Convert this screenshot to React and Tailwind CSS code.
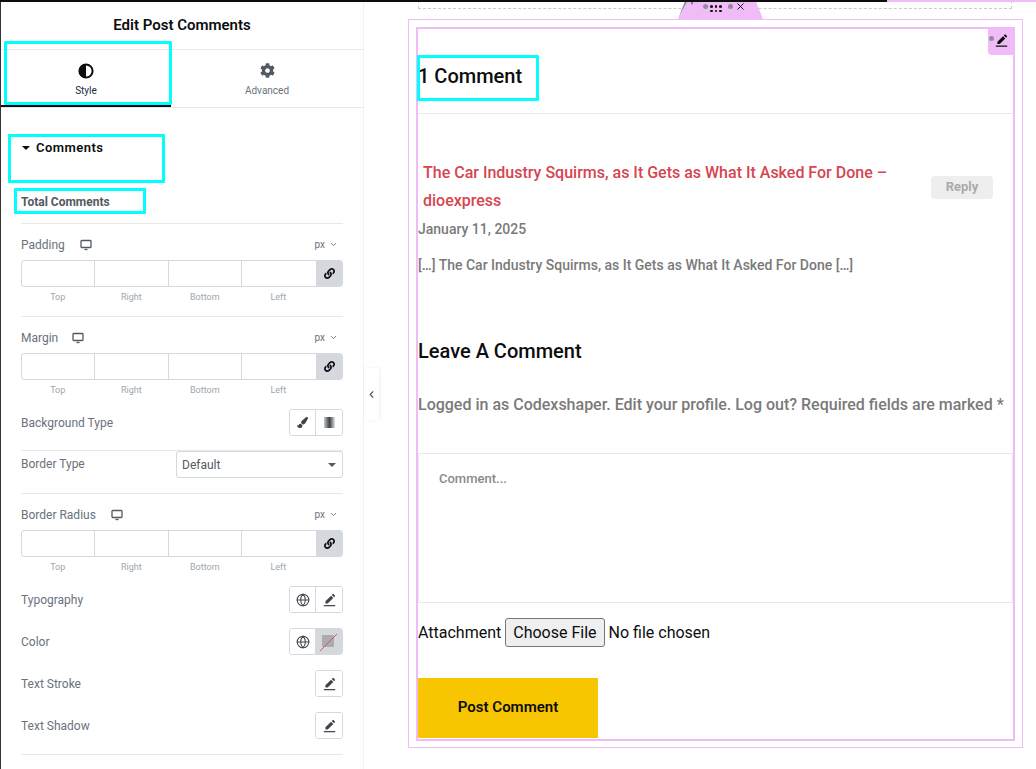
import { ChevronDown, ChevronLeft, Globe, Plus, X } from 'lucide-react'
import { FaCog, FaLink, FaPaintBrush } from 'react-icons/fa'

function Cyan({ className }) {
  return <div className={`absolute border-[3px] border-[#00ffff] rounded-[1px] pointer-events-none ${className}`} />
}

function Pencil({ className = 'w-[13px] h-[14px] text-[#3f444b]' }) {
  return (
    <svg viewBox="0 0 16 16" className={className} fill="currentColor">
      <path d="M3 9.6 9.9 2.7l2.8 2.8-6.9 6.9H3z" />
      <path d="m10.8 1.8 1.1-1.1a.7.7 0 0 1 1 0l1.8 1.8a.7.7 0 0 1 0 1l-1.1 1.1z" />
      <rect x="1" y="14.2" width="14" height="1.5" />
    </svg>
  )
}

function Monitor() {
  return (
    <svg viewBox="0 0 12 12" className="w-[12px] h-[12px] text-[#515962]" fill="none" stroke="currentColor">
      <rect x="1" y="1.5" width="10" height="7" rx=".8" strokeWidth="1.3" />
      <path d="M4.5 10.5h3" strokeWidth="1.3" />
    </svg>
  )
}

function HalfCircle() {
  return (
    <svg viewBox="0 0 16 16" className="w-[16px] h-[16px]">
      <circle cx="8" cy="8" r="6.6" fill="#fff" stroke="#0c0d0e" strokeWidth="2" />
      <path d="M8 1a7 7 0 0 0 0 14z" fill="#0c0d0e" />
    </svg>
  )
}

function Unit() {
  return (
    <span className="flex items-center gap-[4px] text-[10px] text-[#69727d] pr-[5px]">
      px <ChevronDown className="w-[9px] h-[9px]" strokeWidth={2.5} />
    </span>
  )
}

function Dimensions({ label, gap, border = false, height }) {
  return (
    <div className={`${height} ${border ? 'border-b border-[#e6e8ea]' : ''}`}>
      <div className="flex items-center justify-between h-[21px]">
        <div className={`flex items-center ${gap}`}>
          <span className="text-[12px] text-[#69727d]">{label}</span>
          <Monitor />
        </div>
        <Unit />
      </div>
      <div className="flex h-[27px] mt-[5px] border border-[#d5d8dc] rounded-[3px] overflow-hidden">
        <div className="w-[73px] border-r border-[#d5d8dc]" />
        <div className="w-[74px] border-r border-[#d5d8dc]" />
        <div className="w-[73px] border-r border-[#d5d8dc]" />
        <div className="w-[74px]" />
        <div className="flex-1 bg-[#d5d8dc] flex items-center justify-center">
          <FaLink className="w-[11px] h-[11px] text-[#0c0d0e]" />
        </div>
      </div>
      <div className="flex text-[9px] text-[#9da5ae] mt-[4px] pr-[28px]">
        {['Top', 'Right', 'Bottom', 'Left'].map((t) => (
          <span key={t} className="w-[73.5px] text-center">{t}</span>
        ))}
      </div>
    </div>
  )
}

function ButtonRow({ label, children }) {
  return (
    <div className="flex items-center justify-between h-[27px] mt-[15px]">
      <span className="text-[12px] text-[#69727d]">{label}</span>
      <div className="flex h-[27px] border border-[#d5d8dc] rounded-[3px] overflow-hidden">{children}</div>
    </div>
  )
}

function IconCell({ children, last, gray }) {
  return (
    <div className={`w-[26px] flex items-center justify-center ${last ? '' : 'border-r border-[#d5d8dc]'} ${gray ? 'bg-[#d5d8dc]' : 'bg-white'}`}>
      {children}
    </div>
  )
}

function Sidebar() {
  return (
    <aside className="relative w-[364px] h-full shrink-0 bg-white border-l border-[#333] border-r-[#f1f2f3] border-r">
      <div className="h-[50px] flex items-center justify-center text-[15px] font-semibold text-[#0c0d0e] border-b border-[#e6e8ea] pt-[2px]">
        Edit Post Comments
      </div>
      <div className="relative flex h-[58px] border-b border-[#e6e8ea]">
        <div className="w-[170px] flex flex-col items-center pt-[13px] border-b-2 border-[#0c0d0e] h-[57px]">
          <HalfCircle />
          <span className="text-[10px] text-[#1a2a44] mt-[4px]">Style</span>
        </div>
        <div className="flex-1 flex flex-col items-center pt-[13px]">
          <FaCog className="w-[15px] h-[15px] text-[#515962]" />
          <span className="text-[10px] text-[#69727d] mt-[5px]">Advanced</span>
        </div>
        <Cyan className="left-[3px] top-[-9px] w-[168px] h-[64px]" />
      </div>

      <div className="relative h-[115px]">
        <div className="flex items-center gap-[6px] pl-[21px] pt-[32px]">
          <span className="w-0 h-0 border-x-[4px] border-x-transparent border-t-[4px] border-t-[#0c0d0e]" />
          <span className="text-[13px] font-semibold leading-[16px] text-[#0c0d0e] tracking-[.45px]">Comments</span>
        </div>
        <div className="pl-[20px] pt-[39px] text-[12px] font-bold leading-[14px] text-[#515962]">Total Comments</div>
        <Cyan className="left-[7px] top-[26px] w-[157px] h-[49px]" />
        <Cyan className="left-[13px] top-[80px] w-[132px] h-[26px]" />
      </div>

      <div className="mx-[20px] border-t border-[#e6e8ea] pt-[10px]">
        <Dimensions label="Padding" gap="gap-[15px]" border height="h-[83px]" />
        <div className="pt-[10px]">
          <Dimensions label="Margin" gap="gap-[14px]" height="h-[67px]" />
        </div>
        <ButtonRow label="Background Type">
          <IconCell><FaPaintBrush className="w-[11px] h-[11px] text-[#3f444b]" /></IconCell>
          <IconCell last>
            <span className="w-[11px] h-[11px] bg-gradient-to-r from-[#c9ccd0] via-[#3f444b] to-[#e6e8ea]" />
          </IconCell>
        </ButtonRow>
        <div className="mt-[14px] border-y border-[#e6e8ea] h-[44px] flex items-start justify-between">
          <span className="text-[12px] text-[#69727d] leading-[27px]">Border Type</span>
          <div className="w-[167px] h-[27px] border border-[#d5d8dc] rounded-[3px] flex items-center justify-between pl-[5px] pr-[6px] text-[12px] text-[#515962]">
            Default
            <span className="w-0 h-0 border-x-[4px] border-x-transparent border-t-[4px] border-t-[#515962]" />
          </div>
        </div>
        <div className="pt-[10px]">
          <Dimensions label="Border Radius" gap="gap-[15px]" height="h-[67px]" />
        </div>
        <ButtonRow label="Typography">
          <IconCell><Globe className="w-[14px] h-[14px] text-[#3f444b]" strokeWidth={1.8} /></IconCell>
          <IconCell last><Pencil /></IconCell>
        </ButtonRow>
        <ButtonRow label="Color">
          <IconCell><Globe className="w-[14px] h-[14px] text-[#3f444b]" strokeWidth={1.8} /></IconCell>
          <IconCell last gray>
            <svg viewBox="0 0 20 20" className="w-[20px] h-[20px]">
              <rect x="3" y="3" width="12" height="12" rx="1" fill="#a9adb2" />
              <path d="M1 19 18 2" stroke="#e2505f" strokeWidth="1" />
            </svg>
          </IconCell>
        </ButtonRow>
        <ButtonRow label="Text Stroke">
          <IconCell last><Pencil /></IconCell>
        </ButtonRow>
        <ButtonRow label="Text Shadow">
          <IconCell last><Pencil /></IconCell>
        </ButtonRow>
        <div className="mt-[15px] border-t border-[#e6e8ea]" />
      </div>

      <div className="absolute left-[363px] top-[368px] w-[15px] h-[52px] bg-white shadow-[1px_0_3px_rgba(0,0,0,.07)] flex items-center justify-center z-10">
        <ChevronLeft className="w-[11px] h-[11px] text-[#515962]" strokeWidth={2.5} />
      </div>
    </aside>
  )
}

function Canvas() {
  return (
    <main className="relative flex-1 h-full bg-white pl-[44px] pr-[13px] text-black overflow-hidden">
      <div className="absolute left-[54px] right-[24px] top-0 h-[9px] border-x border-b border-dashed border-[#c9cbce]" />
      <div className="absolute left-[314px] top-0 w-[85px] h-[19px] bg-[#f0bcf8] [clip-path:polygon(9%_0,91%_0,100%_100%,0_100%)]">
        <span className="absolute left-0 top-0 w-[10px] h-[18px] bg-[#818a96] [clip-path:polygon(70%_0,100%_0,0_100%)]" />
        <Plus className="absolute left-[9px] top-[-4px] w-[10px] h-[10px] text-[#0c0d0e]" strokeWidth={2} />
        <span className="absolute left-[25px] top-[4px] w-[5px] h-[5px] rounded-full bg-[#8f8f99]" />
        <span className="absolute left-[32px] top-[5px] grid grid-cols-3 gap-[2px]">
          {[0, 1, 2, 3, 4, 5].map((i) => <span key={i} className="w-[2.5px] h-[2.5px] rounded-full bg-[#0c0d0e]" />)}
        </span>
        <span className="absolute left-[50px] top-[4px] w-[5px] h-[5px] rounded-full bg-[#8f8f99]" />
        <X className="absolute left-[57px] top-[1px] w-[11px] h-[11px] text-[#0c0d0e]" strokeWidth={2} />
      </div>

      <div className="mt-[19px] h-[729px] border border-[#f0bcf8] pt-[7px] pl-[7px] pr-[7px]">
        <div className="relative h-[714px] border-2 border-[#f0bcf8]">
          <div className="absolute right-[-2px] top-[-2px] w-[27px] h-[28px] bg-[#f0bcf8] rounded-bl-[4px] z-10">
            <span className="absolute left-[1px] top-[9px] w-[5px] h-[5px] rounded-full bg-[#8f8f99]" />
            <Pencil className="absolute left-[7px] top-[7px] w-[13px] h-[13px] text-[#0c0d0e]" />
          </div>

          <div className="relative h-[85px] border-b border-[#e8e8e8] pt-[33px]">
            <h2 className="text-[20px] font-medium leading-[28px] text-[#0c0d0e]">1 Comment</h2>
            <Cyan className="left-[-1px] top-[26px] w-[122px] h-[46px]" />
          </div>

          <div className="flex items-center justify-between pl-[5px] pr-[20px] pt-[45px]">
            <div className="w-[480px] text-[16px] font-medium leading-[28px] text-[#d64550]">
              The Car Industry Squirms, as It Gets as What It Asked For Done – dioexpress
            </div>
            <button className="w-[62px] h-[23px] rounded-[4px] bg-[#eeeeee] text-[13px] font-bold text-[#aaaaaa]">Reply</button>
          </div>
          <div className="text-[14px] font-medium leading-[20px] text-[#7a7a7a] mt-[4px]">January 11, 2025</div>
          <div className="text-[14px] font-medium leading-[20px] text-[#7a7a7a] mt-[16px]">[…] The Car Industry Squirms, as It Gets as What It Asked For Done […]</div>

          <h3 className="text-[20px] font-medium leading-[28px] text-[#0c0d0e] mt-[62px]">Leave A Comment</h3>
          <p className="text-[16px] font-medium leading-[24px] text-[#7a7a7a] mt-[28px]">Logged in as Codexshaper. Edit your profile. Log out? Required fields are marked *</p>

          <textarea
            readOnly
            placeholder="Comment..."
            className="block w-full h-[150px] mt-[36px] pl-[20px] pr-[20px] pt-[15px] border border-[#e8e8e8] resize-none text-[13px] font-medium placeholder:text-[#8a8a8a] outline-none"
          />

          <div className="flex items-center gap-[4px] mt-[15px] text-[16px] text-[#0c0d0e]">
            <span>Attachment</span>
            <input
              type="file"
              className="text-[16px] file:mr-[4px] file:h-[29px] file:px-[7px] file:bg-[#efefef] file:border file:border-[#767676] file:rounded-[3px] file:text-[16px]"
            />
          </div>

          <button className="block w-[180px] h-[60px] mt-[31px] pb-[2px] bg-[#f8c600] text-[15px] font-semibold text-[#0c0d0e]">Post Comment</button>
        </div>
      </div>
    </main>
  )
}

export default function App() {
  return (
    <div className="relative w-[1036px] h-[769px] flex overflow-hidden bg-white font-['Roboto',sans-serif]">
      <div className="absolute inset-x-0 top-0 h-[2px] bg-[#0c0d0e] z-20" />
      <div className="absolute left-[887px] right-0 top-0 h-[2px] bg-[#f0bcf8] z-20" />
      <Sidebar />
      <Canvas />
    </div>
  )
}
